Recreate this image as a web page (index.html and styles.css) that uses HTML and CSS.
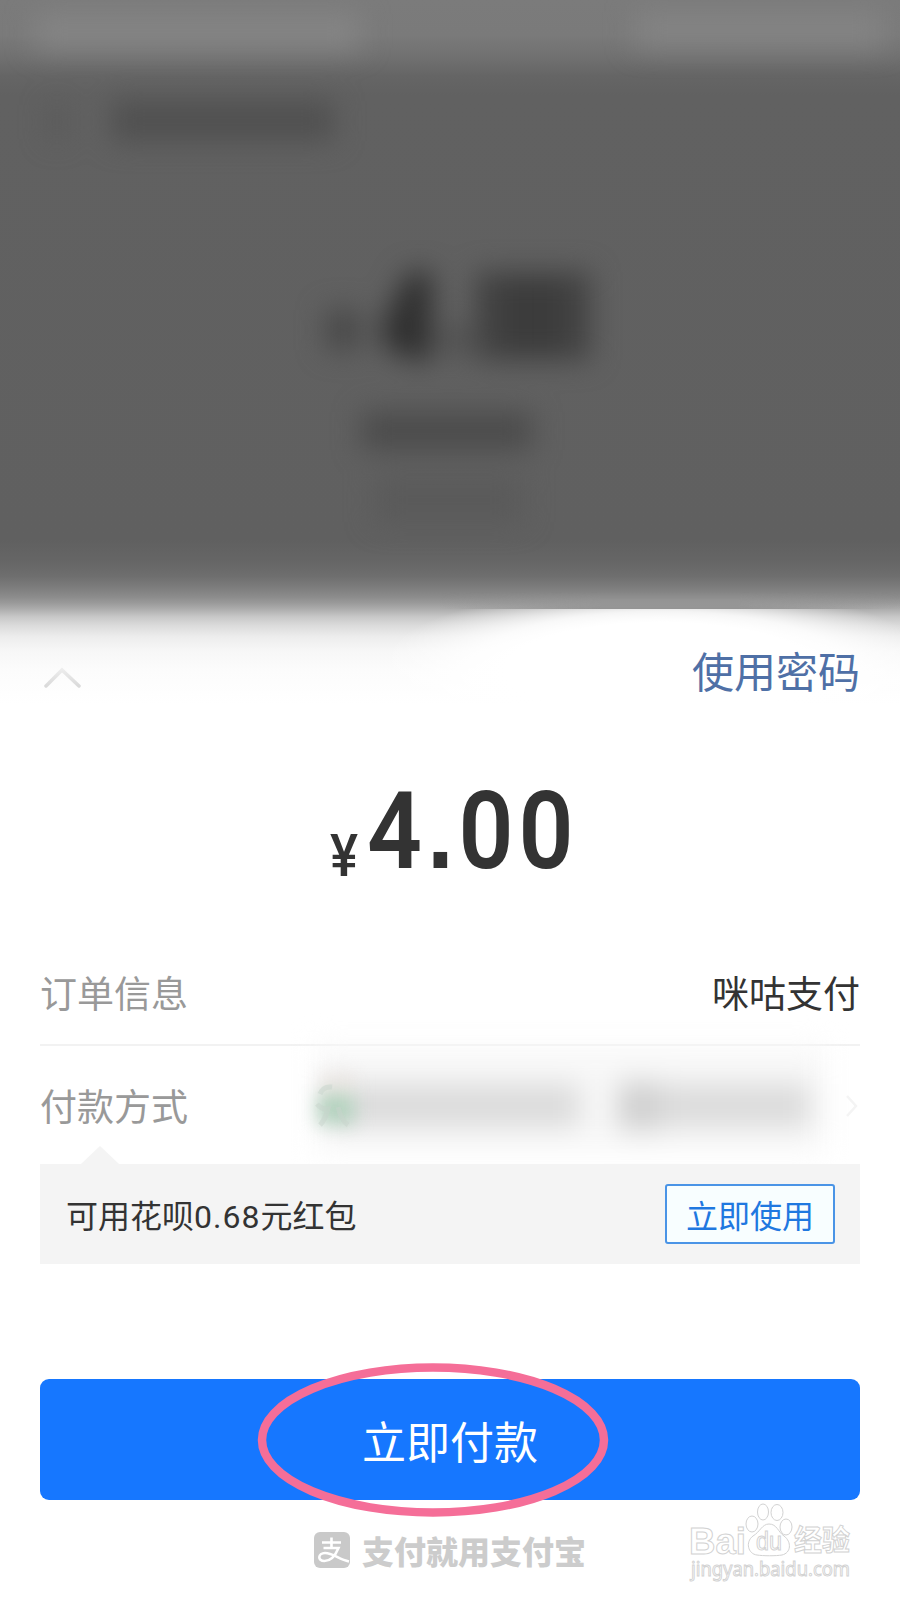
FILE: index.html
```html
<!DOCTYPE html>
<html lang="zh-CN">
<head>
    <meta charset="UTF-8">
    <meta name="viewport" content="width=device-width, initial-scale=1.0">
    <title>立即付款</title>
    <link rel="stylesheet" href="styles.css">
</head>
<body>
    <div class="backdrop">
        <svg width="900" height="608" viewBox="0 0 900 608">
            <defs>
                <filter id="soft" filterUnits="userSpaceOnUse" x="0" y="0" width="900" height="608" color-interpolation-filters="sRGB">
                    <feGaussianBlur stdDeviation="14" />
                </filter>
            </defs>
            <g filter="url(#soft)">
                <rect x="35" y="14" width="325" height="34" fill="#858585" />
                <rect x="635" y="12" width="250" height="34" fill="#848484" />
                <rect x="50" y="105" width="14" height="34" fill="#575757" />
                <rect x="112" y="101" width="222" height="40" fill="#505050" />
                <rect x="326" y="310" width="34" height="40" fill="#484848" />
                <path d="M408 272h24v88h-20l-30-14v-22z" fill="#303030" />
                <rect x="446" y="325" width="20" height="30" fill="#4c4c4c" />
                <rect x="476" y="272" width="114" height="88" fill="#414141" />
                <rect x="510" y="280" width="46" height="72" fill="#3b3b3b" />
                <rect x="362" y="412" width="170" height="38" fill="#4b4b4b" />
                <rect x="375" y="478" width="148" height="44" fill="#5a5a5a" />
            </g>
        </svg>
    </div>

    <div class="sheet">
        <div class="sheet-top">
            <svg class="collapse" width="40" height="22" viewBox="0 0 40 22">
                <defs>
                    <linearGradient id="fade" gradientUnits="userSpaceOnUse" x1="0" y1="3" x2="0" y2="20">
                        <stop offset="0" stop-color="#ededed" />
                        <stop offset="1" stop-color="#dadada" />
                    </linearGradient>
                </defs>
                <path d="M4 20L20 4L37 20" stroke="url(#fade)" />
            </svg>
            <a class="use-password">使用密码</a>
        </div>

        <div class="amount">
            <span class="yen">¥</span><span class="number">4<span class="point">.</span>00</span>
        </div>

        <div class="row order">
            <span class="label">订单信息</span>
            <span class="value">咪咕支付</span>
        </div>
        <div class="row method">
            <span class="label">付款方式</span>
            <svg class="hidden-card" width="610" height="118" viewBox="0 0 610 118">
                <defs>
                    <filter id="haze" filterUnits="userSpaceOnUse" x="0" y="-60" width="640" height="240" color-interpolation-filters="sRGB">
                        <feGaussianBlur stdDeviation="14" />
                    </filter>
                    <filter id="dot" filterUnits="userSpaceOnUse" x="0" y="-60" width="200" height="240" color-interpolation-filters="sRGB">
                        <feGaussianBlur stdDeviation="9" />
                    </filter>
                </defs>
                <g filter="url(#haze)">
                    <rect x="65" y="0" width="510" height="105" fill="#f8f8f8" />
                    <rect x="80" y="38" width="250" height="43" fill="#dbdbdb" />
                    <rect x="368" y="36" width="44" height="48" fill="#cfcfcf" />
                    <rect x="408" y="38" width="152" height="43" fill="#dbdbdb" />
                </g>
                <g filter="url(#dot)">
                    <rect x="70" y="28" width="34" height="22" fill="#ebe6e3" />
                    <rect x="68" y="48" width="36" height="30" fill="#b3d2be" />
                </g>
                <path class="badge" d="M70 48Q73 40 82 41M67 58Q72 64 78 63Q75 74 70 79M88 61Q91 74 98 79" />
                <path class="next" d="M597 50L606 60L597 70" />
            </svg>
        </div>

        <div class="promo">
            <span class="promo-text">可用花呗<span class="money">0.68</span>元红包</span>
            <button class="use-btn">立即使用</button>
        </div>

        <button class="pay-btn">立即付款</button>

        <div class="brand">
            <svg width="36" height="36" viewBox="0 0 36 36">
                <rect width="36" height="36" rx="6" fill="#c9c9c9" />
                <path d="M8 10.5H27M17.500 5.500V16M9.500 16H24.500C22 22 17 29 10.500 29C3 29 4 21 11 21C19 21 25 27.500 35 29.500" fill="none" stroke="#fff" stroke-width="2.600" />
            </svg>
            <span>支付就用支付宝</span>
        </div>
    </div>

    <svg class="circle-mark" width="352" height="154" viewBox="0 0 352 154">
        <ellipse cx="176" cy="77" rx="171" ry="72.500" />
    </svg>

    <svg class="watermark" width="170" height="110" viewBox="0 0 170 110">
        <text class="wm-name" x="3" y="64" textLength="57" lengthAdjust="spacingAndGlyphs">Bai</text>
        <ellipse cx="66" cy="34" rx="6" ry="8" />
        <ellipse cx="77" cy="22" rx="5.500" ry="8" />
        <ellipse cx="91" cy="22.500" rx="6" ry="8" />
        <ellipse cx="100" cy="37" rx="6" ry="8" />
        <path d="M83 34C76 34 74 42 67 46C59 52 62 64 71 65C77 66 90 66 96 65C105 63 106 52 98 46C92 42 91 34 83 34Z" />
        <text class="wm-du" x="70" y="60" textLength="26" lengthAdjust="spacingAndGlyphs">du</text>
        <text class="wm-cn" x="108" y="61" textLength="56" lengthAdjust="spacingAndGlyphs">经验</text>
        <text class="wm-url" x="5" y="86" textLength="159" lengthAdjust="spacingAndGlyphs">jingyan.baidu.com</text>
    </svg>
</body>
</html>
```

FILE: styles.css
```css
* {
    box-sizing: border-box;
}
body {
    position: relative;
    width: 900px;
    height: 1600px;
    margin: 0;
    overflow: hidden;
    background: #fff;
    color: #333;
    font-family: "Noto Sans CJK SC", sans-serif;
}
button {
    font-family: inherit;
    cursor: pointer;
}
svg {
    display: block;
}

/* dimmed page behind the sheet */
.backdrop {
    height: 609px;
    background: linear-gradient(#7b7b7b 0, #7a7a7a 35px, #717171 56px, #656565 76px, #616161 95px, #606060 540px, #666 562px, #6e6e6e 576px, #7c7c7c 587px, #8c8c8c 597px, #9a9a9a 603px, #acacac 609px);
}
.backdrop::after {
    content: "";
    position: absolute;
    left: 440px;
    top: 592px;
    width: 460px;
    height: 17px;
    background: linear-gradient(90deg, rgba(144, 144, 144, 0), #939393 35%, #939393 65%, rgba(144, 144, 144, 0));
    -webkit-mask-image: linear-gradient(transparent, #000);
    mask-image: linear-gradient(transparent, #000);
}

.sheet {
    position: relative;
    display: flex;
    flex-direction: column;
    height: 991px;
    padding: 0 40px;
    background: linear-gradient(#acacac 0, #c8c8c8 8px, #dcdcdc 17px, #ededed 28px, #f7f7f7 42px, #fcfcfc 62px, #fff 95px);
}
.sheet::before {
    content: "";
    position: absolute;
    left: 380px;
    top: 0;
    width: 520px;
    height: 120px;
    background: radial-gradient(ellipse 280px 85px at 280px 60px, #fff 55%, rgba(255, 255, 255, 0.85) 68%, rgba(255, 255, 255, 0.4) 84%, rgba(255, 255, 255, 0) 100%);
}
.sheet-top {
    position: relative;
    display: flex;
    justify-content: space-between;
    align-items: center;
    height: 130px;
}
.collapse {
    margin: 7px 0 0 2px;
    fill: none;
    stroke-width: 3.5;
    stroke-linecap: round;
}
.use-password {
    margin-bottom: 7px;
    font-size: 42px;
    line-height: 60px;
    color: #4f70a6;
}

.amount {
    display: flex;
    align-items: baseline;
    height: 201px;
    padding-left: 290px;
    font-family: Roboto, sans-serif;
    line-height: 187px;
}
.yen {
    position: relative;
    top: 8px;
    width: 37px;
    font-size: 60px;
    font-weight: 500;
    transform: scaleX(0.88);
    transform-origin: left;
}
.number {
    font-size: 107px;
    font-weight: 600;
    letter-spacing: 5.4px;
    transform: scaleX(0.9);
    transform-origin: left;
}
.point {
    font-family: "Liberation Sans", sans-serif;
    font-weight: bold;
}

.row {
    display: flex;
    justify-content: space-between;
    align-items: center;
    font-size: 37px;
}
.order {
    height: 108px;
    border-bottom: 2px solid #f2f2f2;
}
.method {
    height: 118px;
}
.label {
    color: #999;
}
.hidden-card {
    overflow: visible;
}
.badge {
    fill: none;
    stroke: #c8d3cb;
    stroke-width: 5;
    opacity: 0.5;
}
.next {
    fill: none;
    stroke: #f4f4f4;
    stroke-width: 2.5;
}

.promo {
    position: relative;
    display: flex;
    justify-content: space-between;
    align-items: center;
    height: 100px;
    padding: 0 25px 0 26px;
    background: #f4f4f4;
}
.promo::before {
    content: "";
    position: absolute;
    left: 41px;
    top: -18px;
    border: 19px solid transparent;
    border-top: 0;
    border-bottom: 18px solid #f4f4f4;
}
.promo-text {
    font-size: 32px;
}
.money {
    font-family: Roboto, sans-serif;
    letter-spacing: 1px;
}
.use-btn {
    width: 170px;
    height: 60px;
    padding: 0;
    border: 2px solid #4a94e6;
    border-radius: 3px;
    background: #f8feff;
    color: #1f78e0;
    font-size: 32px;
    line-height: 56px;
}

.pay-btn {
    height: 122px;
    margin-top: 115px;
    padding: 2px 0 0;
    border: none;
    border-radius: 9px;
    background: #1677ff;
    color: #fff;
    font-size: 44px;
}

.brand {
    display: flex;
    justify-content: center;
    align-items: center;
    gap: 12px;
    height: 101px;
    font-size: 32px;
    font-weight: 900;
    color: #ccc;
}

/* hand-drawn ring over the pay button */
.circle-mark {
    position: absolute;
    left: 257px;
    top: 1363px;
    fill: none;
    stroke: #f56e98;
    stroke-width: 8.5;
}

.watermark {
    position: absolute;
    left: 686px;
    top: 1490px;
    fill: #fff;
    stroke: #d2d2d2;
    stroke-width: 1;
    font-family: "Liberation Sans", sans-serif;
}
.wm-name {
    font-size: 37px;
    font-weight: bold;
}
.wm-du {
    font-size: 25px;
}
.wm-cn {
    font-family: "Noto Sans CJK SC", sans-serif;
    font-size: 29px;
    font-weight: bold;
}
.wm-url {
    font-family: "Noto Sans", sans-serif;
    font-size: 20px;
}
```
